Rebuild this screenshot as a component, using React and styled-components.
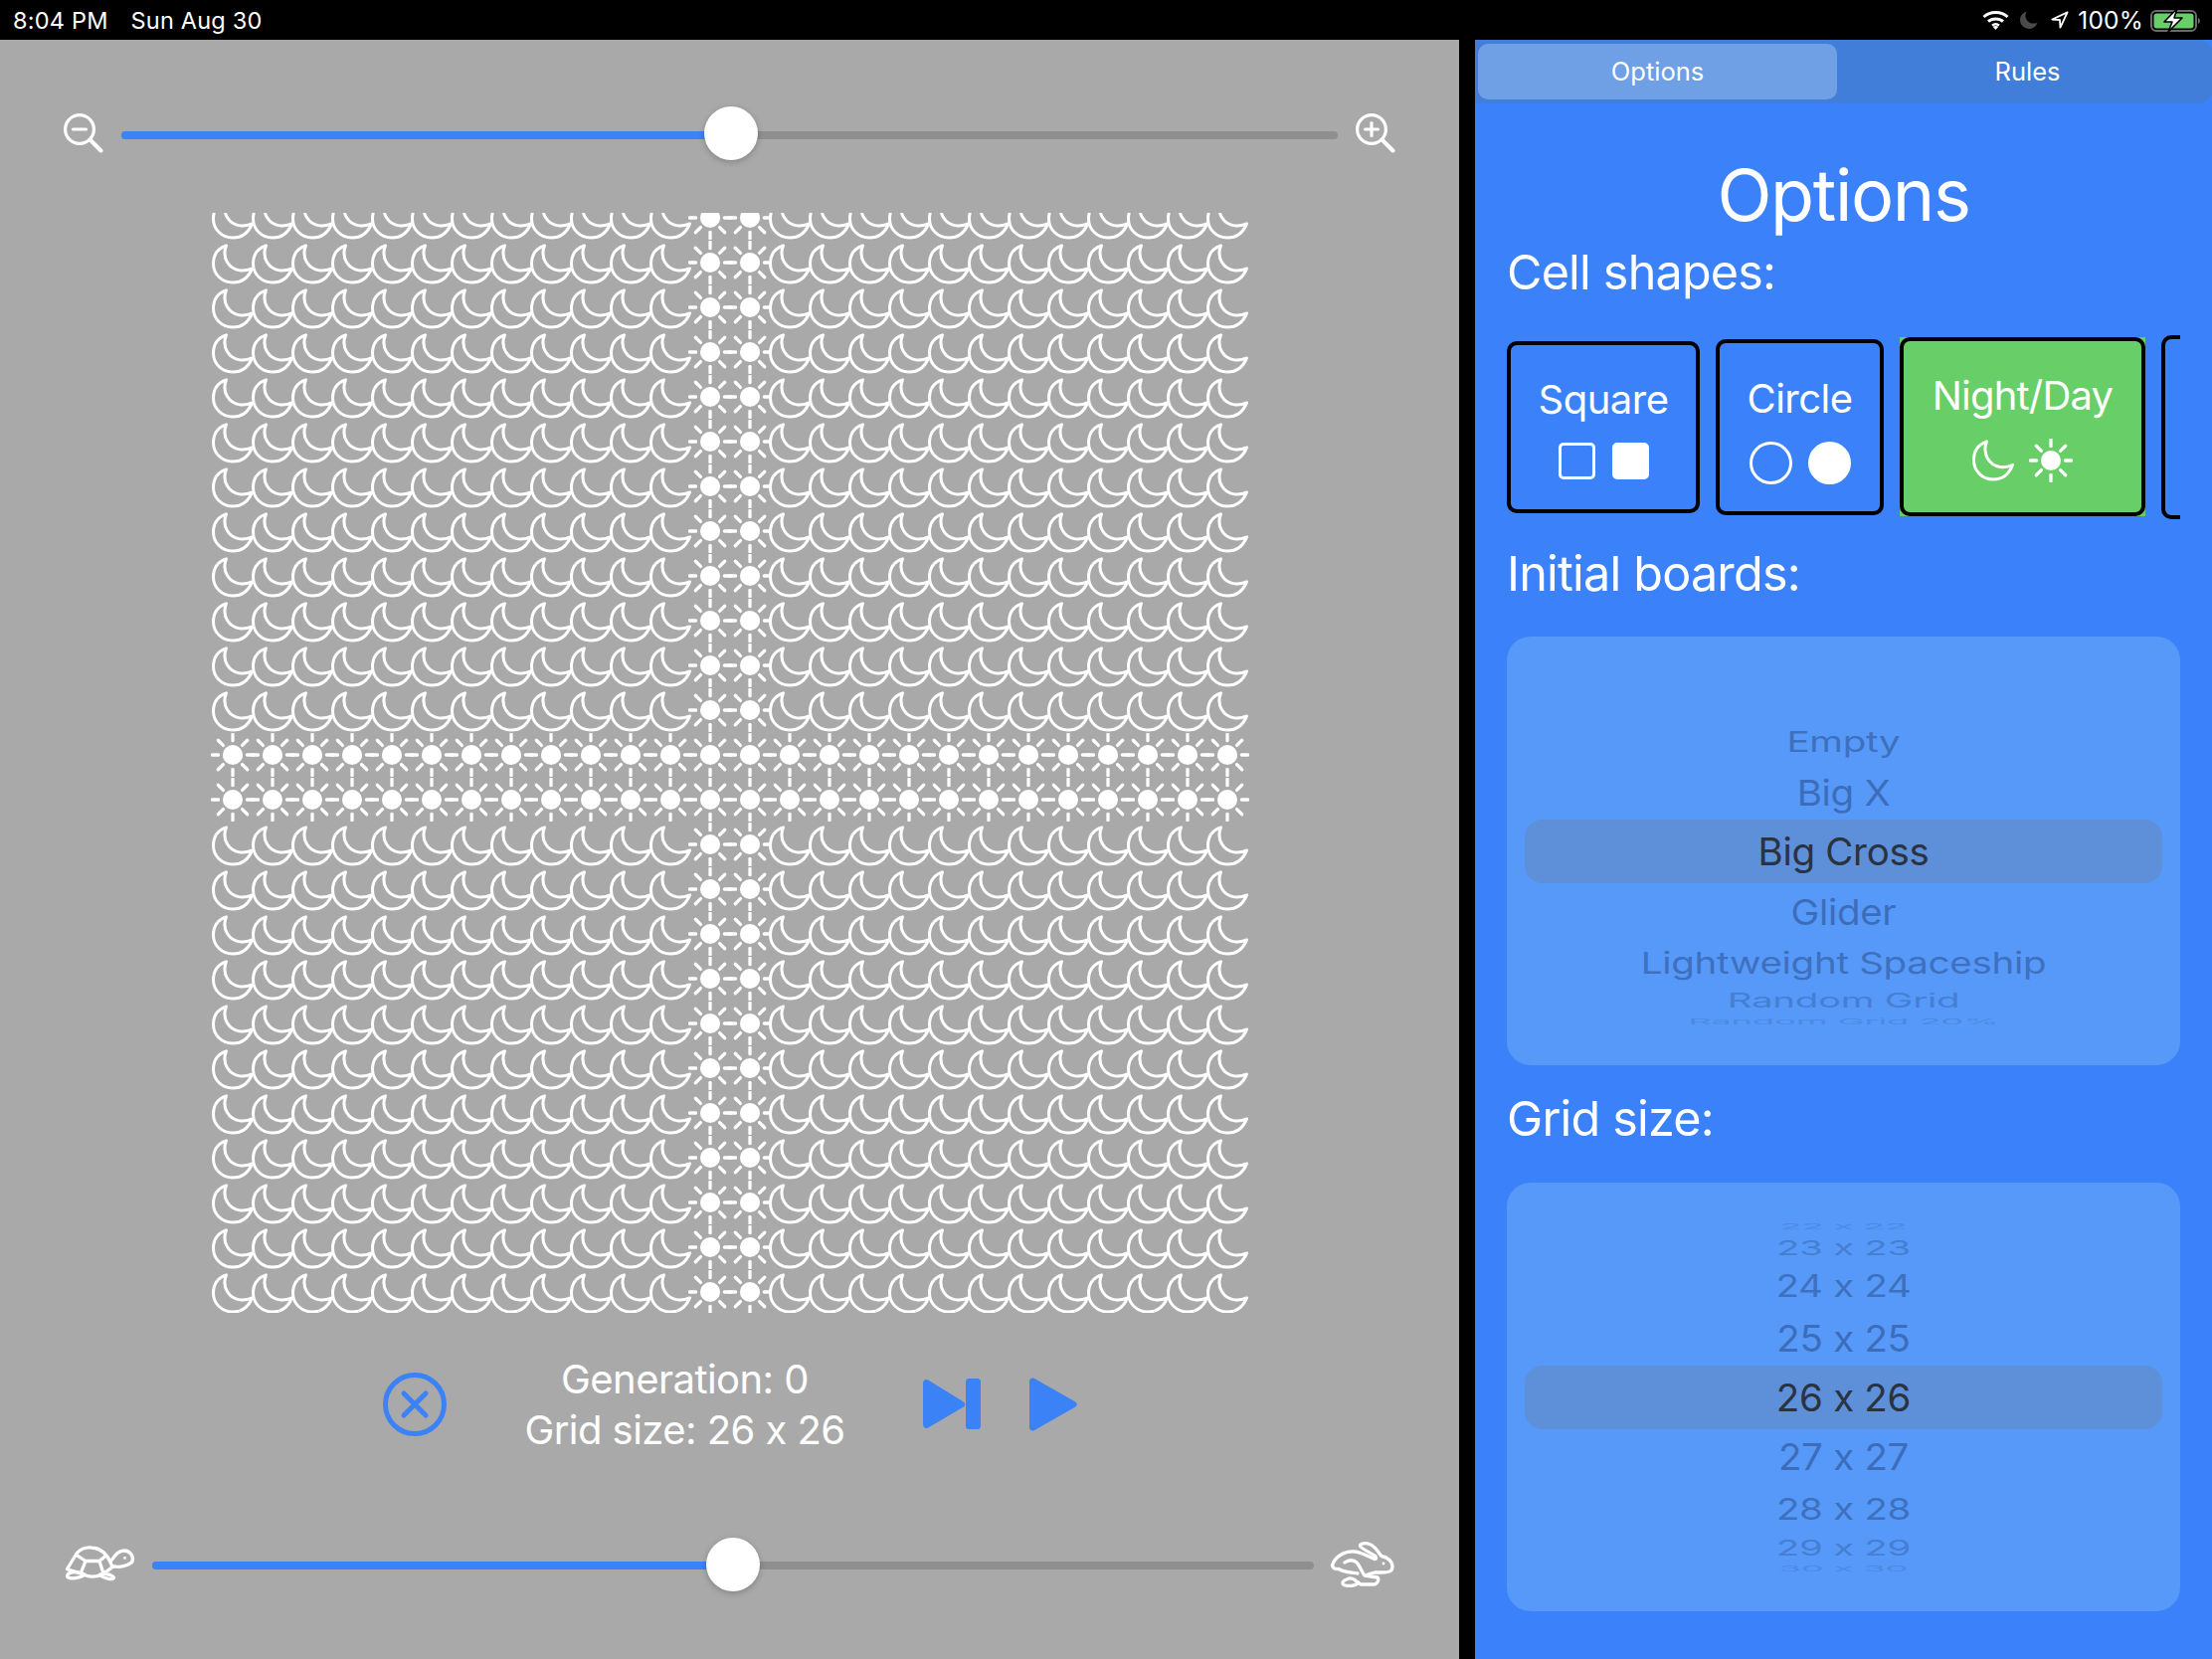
import React from 'react';
import styled, { createGlobalStyle } from 'styled-components';

const Global = createGlobalStyle`
  html, body { margin: 0; padding: 0; background: #000; }
  body {
    font-family: Inter, "Noto Sans", "Liberation Sans", sans-serif;
    font-feature-settings: "calt" 0;
  }
`;

const Page = styled.div`
  width: 2224px; height: 1668px; overflow: hidden;
  display: flex; flex-direction: column; background: #000;
`;

const StatusBar = styled.div`
  height: 40px; flex: none; padding: 0 11px 0 13px;
  display: flex; align-items: center; color: #fff; font-size: 23.5px;
  letter-spacing: 0.2px;
`;
const StatusTime = styled.span`margin-right: 23px;`;
const StatusRight = styled.div`
  margin-left: auto; display: flex; align-items: center;
`;
const StatusPercent = styled.span`margin: 0 7px 0 9px; font-size: 24.5px;`;

const Main = styled.div`
  flex: 1; display: flex; gap: 16px; min-height: 0;
`;

const Left = styled.div`
  width: 1467px; flex: none; background: #a9a9a9;
  display: flex; flex-direction: column;
`;
const SliderRow = styled.div`
  display: flex; align-items: center; height: 54px;
  padding: 0 64px;
  margin-top: ${p => p.$top}px;
  gap: ${p => p.$gap}px;
`;
const SliderBox = styled.div`
  flex: 1; position: relative; height: 8px; border-radius: 4px; background: #8f8f8f;
  top: ${p => p.$shift}px;
`;
const SliderFill = styled.div`
  height: 8px; border-radius: 4px; background: #3b82f6; width: ${p => p.$value}%;
`;
const Thumb = styled.div`
  position: absolute; left: ${p => p.$value}%; top: 50%;
  width: 54px; height: 54px; border-radius: 50%; background: #fff;
  transform: translate(-50%, calc(-50% - ${p => p.$shift}px));
  box-shadow: 0 2px 6px rgba(0,0,0,.22);
`;

const Board = styled.div`
  width: 1040px; height: 1106px; margin: 53px 0 0 214px; flex: none;
  overflow-x: visible; overflow-y: clip;
`;
const BoardGrid = styled.div`
  display: grid; grid-template-columns: repeat(26, 40px); grid-auto-rows: 45px;
  margin-top: -18px;
`;
const Cell = styled.div`
  display: flex; justify-content: center; align-items: center;
  width: 40px; height: 45px; box-sizing: border-box;
  padding-top: ${p => p.$moon ? 3 : 0}px;
  svg { flex: none; }
`;

const Controls = styled.div`
  display: flex; align-items: center; height: 110px; margin-top: 37px;
  padding-left: 385px;
`;
const Info = styled.div`
  width: 317px; margin: 0 81px; color: #fff; font-size: 40px; line-height: 51px;
  letter-spacing: -0.55px; text-align: center; white-space: nowrap;
  display: flex; flex-direction: column; align-items: center;
`;
const PlayGap = styled.div`width: 49px; flex: none;`;

const Right = styled.div`
  flex: 1; background: #3b82fa; color: #fff; min-width: 0;
  display: flex; flex-direction: column;
`;
const Tabs = styled.div`
  height: 64px; flex: none; background: #417ed9; display: flex; align-items: center;
  padding: 0 3px; border-bottom-right-radius: 14px; border-top-right-radius: 14px;
`;
const Tab = styled.div`
  width: ${p => p.$w}px; height: 56px; display: flex; align-items: center; justify-content: center;
  font-size: 25.5px; border-radius: 10px; color: #fff; padding-bottom: 1px; box-sizing: border-box;
  background: ${p => p.$active ? '#6f9fe4' : 'transparent'};
  ${p => p.$grow ? 'flex: 1; padding-left: 9px;' : ''}
`;
const Title = styled.h1`
  margin: 48px 0 0; font-weight: 400; font-size: 72px; line-height: 88px; text-align: center;
  letter-spacing: -1.4px;
`;
const Section = styled.div`
  padding: 0 32px; display: flex; flex-direction: column;
`;
const Label = styled.div`
  font-size: 48.5px; line-height: 60px; margin-top: ${p => p.$top}px; letter-spacing: -0.8px;
`;
const Carousel = styled.div`
  display: flex; align-items: center; gap: 16px; overflow: hidden;
  height: 186px; margin-top: 32px;
`;
const ShapeCard = styled.div`
  width: ${p => p.$w}px; height: ${p => p.$h}px; flex: none; box-sizing: border-box;
  border-radius: ${p => p.$green ? 0 : 10}px; position: relative;
  border: ${p => p.$green ? 'none' : '4px solid #000'};
  display: flex; flex-direction: column; align-items: center; justify-content: flex-start;
  padding-top: ${p => p.$pad}px;
  font-size: ${p => p.$fs}px; line-height: 50px; letter-spacing: ${p => p.$ls}px;
  background: ${p => p.$green ? '#68ce67' : 'transparent'};
  ${p => p.$green ? `
    &::after {
      content: ''; position: absolute; inset: 0; border: 4px solid #000; border-radius: 10px;
    }
  ` : ''}
`;
const CardIcons = styled.div`
  display: flex; align-items: center; gap: ${p => p.$gap}px; margin-top: 18px;
`;
const SquareShape = styled.div`
  width: 37px; height: 37px; box-sizing: border-box; border-radius: 5px;
  border: 3px solid #fff; background: ${p => p.$fill ? '#fff' : 'transparent'};
`;
const CircleShape = styled.div`
  width: 43px; height: 43px; box-sizing: border-box; border-radius: 50%;
  border: 3px solid #fff; background: ${p => p.$fill ? '#fff' : 'transparent'};
`;

const Picker = styled.div`
  height: ${p => p.$h}px; margin-top: ${p => p.$top}px; flex: none; box-sizing: border-box;
  background: #5699f9; border-radius: 24px; padding: ${p => p.$pad}px 18px 0;
  display: flex; flex-direction: column;
`;
const PickerRow = styled.div`
  height: ${p => p.$h}px; flex: none; display: flex; align-items: center; justify-content: center;
  border-radius: 18px; font-size: 38.5px; letter-spacing: -0.3px;
  background: ${p => p.$sel ? '#5e8fd9' : 'transparent'};
`;
const PickerText = styled.span`
  display: block; white-space: nowrap; line-height: 1;
  color: ${p => p.$sel ? '#2b3240' : '#1e3a6e'};
  opacity: ${p => p.$sel ? 1 : p.$o};
  transform: scale(${p => p.$s < 0.3 ? 0.95 : 1}, ${p => p.$s});
`;

const C = '#fff';
const Moon = ({ w = 42, h = 42 }) => (
  <svg width={w} height={h} viewBox="0 0 42 42" preserveAspectRatio="none" fill="none" stroke={C} strokeWidth="3" strokeLinejoin="round">
    <path d="M14.5 1.8 C5.5 5 1.5 12 1.5 20.5 C1.5 31.5 10 40 21 40 C30 40 37 34.5 40.5 25.5 C36 27.5 32 28 28 27.5 C17.5 26 9.5 15 14.5 1.8 Z" />
  </svg>
);
const Sun = ({ size = 44 }) => {
  const rays = [[15,0,21.7,0],[-15,0,-21.7,0],[0,15,0,21.7],[0,-15,0,-21.7],[10,10,15.4,15.4],[-10,10,-15.4,15.4],[10,-10,15.4,-15.4],[-10,-10,-15.4,-15.4]];
  return (
    <svg width={size} height={size} viewBox="-23 -23 46 46" fill="none">
      <circle r="10.5" fill={C} />
      {rays.map((r, i) => <line key={i} x1={r[0]} y1={r[1]} x2={r[2]} y2={r[3]} stroke={C} strokeWidth="3.4" strokeLinecap="round" />)}
    </svg>
  );
};

const Magnifier = ({ plus }) => (
  <svg width="40" height="40" viewBox="0 0 40 40" fill="none" stroke={C} strokeWidth="3.2" strokeLinecap="round">
    <circle cx="16" cy="16" r="14.4" />
    <line x1="26.5" y1="26.5" x2="37.5" y2="37.5" strokeWidth="4" />
    <line x1="9.5" y1="16" x2="22.5" y2="16" />
    {plus && <line x1="16" y1="9.5" x2="16" y2="22.5" />}
  </svg>
);
const Turtle = () => (
  <svg width="73" height="40" viewBox="22 35 73 40" fill="none" stroke={C} strokeWidth="3.3" strokeLinecap="round" strokeLinejoin="round">
    <path d="M25.5 59.5 L35 44 C39 39 44 37.5 50 38 C60 38.5 67 46 71 57.5 C66 62 62 64 60 65 C55 68 46 68 41 64 C36 63 30 62 25.5 59.5 Z" />
    <path d="M36.5 46.5 L44 51.5 L58 51.5 L64 46.5" />
    <path d="M44 51.5 L39.5 63 M58 51.5 L61.5 62.5" />
    <path d="M71 57 L74 57 C78 58 88 56 91 52 C93 46 88 41 83 41 C77 41 73 46 70 51" />
    <path d="M39 64 C33 61 26 63 25.5 66.5 C25.5 70 37 69.5 43 65.5" />
    <path d="M59 65 C64 63 72 66 72.5 68.5 C71 71 62 68.5 58 65.5" />
    <circle cx="83.5" cy="48.5" r="1.4" fill={C} stroke="none" />
  </svg>
);
const Rabbit = () => (
  <svg width="66" height="46" viewBox="18 31 66 46" fill="none" stroke={C} strokeWidth="3.3" strokeLinecap="round" strokeLinejoin="round">
    <path d="M20.5 55 C23 46 33 40 43 41 C46 41 50 43 53 44 L63 48.5 C65 48.5 65 46 63 45 C58 42 50 38 48.5 35.5 C48 32.5 54 32 58 33.5 C65 36 67 43 70 45.5 C76 46.5 81 51 81 56 C81 61 78 62 70 62 L63 62 C59 63 56 64 54 65" />
    <path d="M20.5 55 C21 58 24 59 27 58.5 C33 62 39 62 46 63" />
    <path d="M33 52 C37 49 42 49 45 52 C48 55 50 61 53 65 L66 67 C68 69 66 74 62 74 L49 74 L45 71 C42 68 38 67 35 69 C31 70 30 73 32 74.5 C36 76 44 76 47 72" />
    <circle cx="72" cy="53" r="1.4" fill={C} stroke="none" />
  </svg>
);
const Wifi = () => (
  <svg width="27" height="20" viewBox="0 0 27 20" fill="none" stroke="#fff" strokeWidth="3">
    <path d="M1.5 7 C8 1 19 1 25.5 7" />
    <path d="M6 11.5 C10 8 17 8 21 11.5" />
    <path d="M10 15.5 C12 14 15 14 17 15.5" strokeWidth="2.4" />
    <path d="M13.5 20 L10.6 16.8 C12 15.6 15 15.6 16.4 16.8 Z" fill="#fff" stroke="none" />
  </svg>
);
const DndMoon = () => (
  <svg width="18" height="18" viewBox="0 0 20 20" style={{ marginLeft: 11 }}>
    <path fill="#4a4a4a" d="M7.5 .6 C3 1.8 0 5.6 0 10 C0 15.5 4.5 20 10 20 C14.4 20 18.2 17 19.4 13 C18 13.7 16.4 14 15 14 C10 14 6 10 6 5 C6 3.4 6.5 1.9 7.5 .6 Z" />
  </svg>
);
const Location = () => (
  <svg width="18" height="18" viewBox="0 0 20 20" fill="none" stroke="#fff" strokeWidth="2" strokeLinejoin="round" style={{ marginLeft: 13 }}>
    <path d="M18.5 1.5 L1.5 9.5 L10 10 L10.5 18.5 Z" />
  </svg>
);
const Battery = () => (
  <svg width="51" height="24" viewBox="0 0 51 24" fill="none">
    <rect x="1" y="3" width="45" height="20" rx="5" stroke="#6b6b6b" strokeWidth="2" />
    <rect x="3.5" y="5.5" width="40" height="15" rx="3" fill="#68ce67" />
    <path d="M48 10 C50.5 10.5 50.5 15.5 48 16 Z" fill="#6b6b6b" />
    <path d="M27 .5 L14 14 L22 14 L18 24 L32 10 L24 10 Z" fill="#fff" stroke="#000" strokeWidth="1.6" strokeLinejoin="round" />
  </svg>
);
const CloseIcon = () => (
  <svg width="64" height="64" viewBox="0 0 64 64" fill="none" stroke="#3b82f6" strokeLinecap="round" style={{ flex: 'none' }}>
    <circle cx="32" cy="32" r="29.5" strokeWidth="5" />
    <path d="M21 21 L43 43 M43 21 L21 43" strokeWidth="5" />
  </svg>
);
const SkipIcon = () => (
  <svg width="58" height="52" viewBox="0 0 58 52" fill="#3b82f6" style={{ flex: 'none' }}>
    <path d="M0 5 C0 1.5 3 0 6 2 L40 23 C43 25 43 27.5 40 29 L6 49 C3 51 0 49.5 0 46 Z" />
    <rect x="43" y="0" width="15" height="51" rx="3.5" />
  </svg>
);
const PlayIcon = () => (
  <svg width="48" height="54" viewBox="0 0 48 54" fill="#3b82f6" style={{ flex: 'none' }}>
    <path d="M0 4 C0 .8 3 -.6 6 1.5 L45.5 24 C48.5 26 48.5 28 45.5 30 L6 52.5 C3 54.6 0 53.2 0 50 Z" />
  </svg>
);

const isSun = (r, c) => r === 12 || r === 13 || c === 12 || c === 13;
const cells = [];
for (let r = 0; r < 26; r++) for (let c = 0; c < 26; c++) cells.push([r, c]);

const boards = [
  ['Empty', 50, .75, .42], ['Big X', 54, .93, .45], ['Big Cross', 64, 1, 1, true], ['Glider', 58, .93, .45],
  ['Lightweight Spaceship', 44, .78, .42], ['Random Grid', 32, .52, .28], ['Random Grid 20%', 10, .2, .16],
];
const sizes = [
  ['22 x 22', 16, .2, .16], ['23 x 23', 26, .53, .28], ['24 x 24', 52, .8, .42], ['25 x 25', 54, .95, .45],
  ['26 x 26', 64, 1, 1, true], ['27 x 27', 56, .95, .45], ['28 x 28', 48, .78, .42], ['29 x 29', 30, .55, .28], ['30 x 30', 12, .2, .16],
];
const renderRows = rows => rows.map(([t, h, s, o, sel]) => (
  <PickerRow key={t} $h={h} $sel={sel}><PickerText $s={s} $o={o} $sel={sel}>{t}</PickerText></PickerRow>
));

export default function App() {
  return (
    <Page>
      <Global />
      <StatusBar>
        <StatusTime>8:04 PM</StatusTime>
        <span>Sun Aug 30</span>
        <StatusRight>
          <Wifi /><DndMoon /><Location />
          <StatusPercent>100%</StatusPercent>
          <Battery />
        </StatusRight>
      </StatusBar>
      <Main>
        <Left>
          <SliderRow $top={67} $gap={18}>
            <Magnifier />
            <SliderBox $shift={2}><SliderFill $value={50.1} /><Thumb $value={50.1} $shift={2} /></SliderBox>
            <Magnifier plus />
          </SliderRow>
          <Board>
            <BoardGrid>
              {cells.map(([r, c]) => (
                <Cell key={`${r}-${c}`} $moon={!isSun(r, c)}>{isSun(r, c) ? <Sun /> : <Moon h={41} />}</Cell>
              ))}
            </BoardGrid>
          </Board>
          <Controls>
            <CloseIcon />
            <Info><span>Generation: 0</span><span>Grid size: 26 x 26</span></Info>
            <SkipIcon />
            <PlayGap />
            <PlayIcon />
          </Controls>
          <SliderRow $top={79} $gap={16}>
            <Turtle />
            <SliderBox $shift={1}><SliderFill $value={50} /><Thumb $value={50} $shift={1} /></SliderBox>
            <Rabbit />
          </SliderRow>
        </Left>
        <Right>
          <Tabs>
            <Tab $w={361} $active>Options</Tab>
            <Tab $grow>Rules</Tab>
          </Tabs>
          <Title>Options</Title>
          <Section>
            <Label $top={4}>Cell shapes:</Label>
            <Carousel>
              <ShapeCard $w={194} $h={173} $pad={30} $fs={40} $ls={-0.5}>Square
                <CardIcons $gap={17}><SquareShape /><SquareShape $fill /></CardIcons>
              </ShapeCard>
              <ShapeCard $w={169} $h={177} $pad={31} $fs={40} $ls={-0.5}>Circle
                <CardIcons $gap={16}><CircleShape /><CircleShape $fill /></CardIcons>
              </ShapeCard>
              <ShapeCard $w={247} $h={180} $pad={34} $fs={40} $ls={-0.8} $green>Night/Day
                <CardIcons $gap={15}><Moon /><Sun /></CardIcons>
              </ShapeCard>
              <ShapeCard $w={200} $h={185} $pad={30} $fs={41} $ls={0} />
            </Carousel>
            <Label $top={25}>Initial boards:</Label>
            <Picker $h={431} $top={33} $pad={80}>{renderRows(boards)}</Picker>
            <Label $top={24}>Grid size:</Label>
            <Picker $h={431} $top={34} $pad={36}>{renderRows(sizes)}</Picker>
          </Section>
        </Right>
      </Main>
    </Page>
  );
}
